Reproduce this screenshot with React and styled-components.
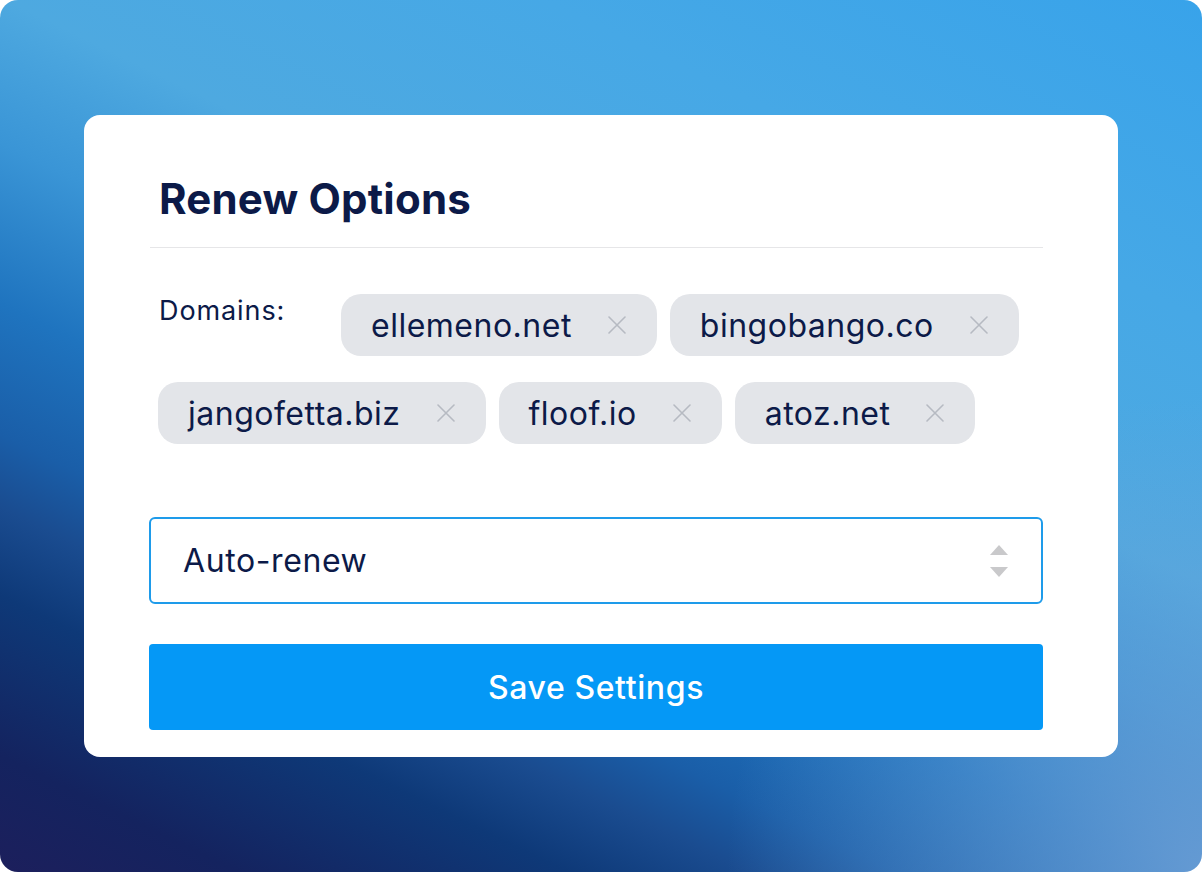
import React from "react";
import styled, { createGlobalStyle } from "styled-components";

const GlobalStyle = createGlobalStyle`
  html, body {
    margin: 0;
    padding: 0;
    background: #ffffff;
  }
  body {
    font-family: Inter, "Noto Sans", sans-serif;
  }
`;

const Backdrop = styled.div`
  width: 1202px;
  height: 872px;
  border-radius: 18px;
  overflow: hidden;
  display: flex;
  align-items: center;
  justify-content: center;
  background:
    radial-gradient(circle at 100% 100%, rgba(112, 160, 214, 0.85) 0%, rgba(112, 160, 214, 0) 32%),
    linear-gradient(
      26deg,
      #1c1f5c 0%,
      #14235f 8%,
      #0e3978 19%,
      #1a4c90 25%,
      #1a5ea8 30%,
      #1f74bf 39%,
      #3a95d6 50%,
      #4ea9e0 60%,
      #46a8e6 78%,
      #38a3ea 100%
    );
`;

const Card = styled.div`
  width: 1034px;
  box-sizing: border-box;
  background: #ffffff;
  border-radius: 16px;
  padding: 61px 75px 27px 65px;
  display: flex;
  flex-direction: column;
`;

const Title = styled.h1`
  margin: 0 0 0 10px;
  font-size: 42px;
  font-weight: 700;
  color: #0c1a48;
  line-height: 46px;
  letter-spacing: 0.2px;
`;

const Divider = styled.hr`
  margin: 25px 0 0 1px;
  border: none;
  border-top: 1.5px solid #e6e6e8;
`;

const ChipArea = styled.div`
  margin: 46px 0 0 9px;
  display: flex;
  flex-wrap: wrap;
  column-gap: 13px;
  row-gap: 26px;
`;

const Label = styled.span`
  width: 169px;
  padding: 2px 0 0 1px;
  font-size: 27px;
  line-height: 30px;
  letter-spacing: 0.9px;
  color: #0c1a48;
`;

const Chip = styled.div`
  height: 62px;
  box-sizing: border-box;
  display: inline-flex;
  align-items: center;
  gap: 36px;
  padding: 0 31px 0 30px;
  border-radius: 20px;
  background: #e3e5e9;
  font-size: 32px;
  letter-spacing: 0.5px;
  color: #0c1a48;
`;

const CloseIcon = () => (
  <svg width="18" height="18" viewBox="0 0 18 18" fill="none">
    <path d="M1 1 L17 17 M17 1 L1 17" stroke="#b6bac2" strokeWidth="1.6" strokeLinecap="round" />
  </svg>
);

const Select = styled.div`
  margin-top: 73px;
  height: 87px;
  box-sizing: border-box;
  border: 2px solid #1e9bea;
  border-radius: 6px;
  display: flex;
  align-items: center;
  justify-content: space-between;
  padding: 0 32px 0 32px;
  font-size: 32px;
  letter-spacing: 0.6px;
  color: #0c1a48;
`;

const Arrows = () => (
  <svg width="20" height="34" viewBox="0 0 20 34" fill="#c9c9cb">
    <path d="M1 11 L10 1 L19 11 Z" />
    <path d="M1 23 L19 23 L10 33 Z" />
  </svg>
);

const SaveButton = styled.button`
  margin-top: 40px;
  height: 86px;
  border: none;
  border-radius: 4px;
  background: #0598f6;
  color: #ffffff;
  font-family: Inter, "Noto Sans", sans-serif;
  font-size: 32px;
  font-weight: 500;
  letter-spacing: 0.6px;
  cursor: pointer;
`;

const domains = ["ellemeno.net", "bingobango.co", "jangofetta.biz", "floof.io", "atoz.net"];

export default function App() {
  return (
    <>
      <GlobalStyle />
      <Backdrop>
        <Card>
          <Title>Renew Options</Title>
          <Divider />
          <ChipArea>
            <Label>Domains:</Label>
            {domains.map((d) => (
              <Chip key={d}>
                {d}
                <CloseIcon />
              </Chip>
            ))}
          </ChipArea>
          <Select>
            Auto-renew
            <Arrows />
          </Select>
          <SaveButton>Save Settings</SaveButton>
        </Card>
      </Backdrop>
    </>
  );
}
